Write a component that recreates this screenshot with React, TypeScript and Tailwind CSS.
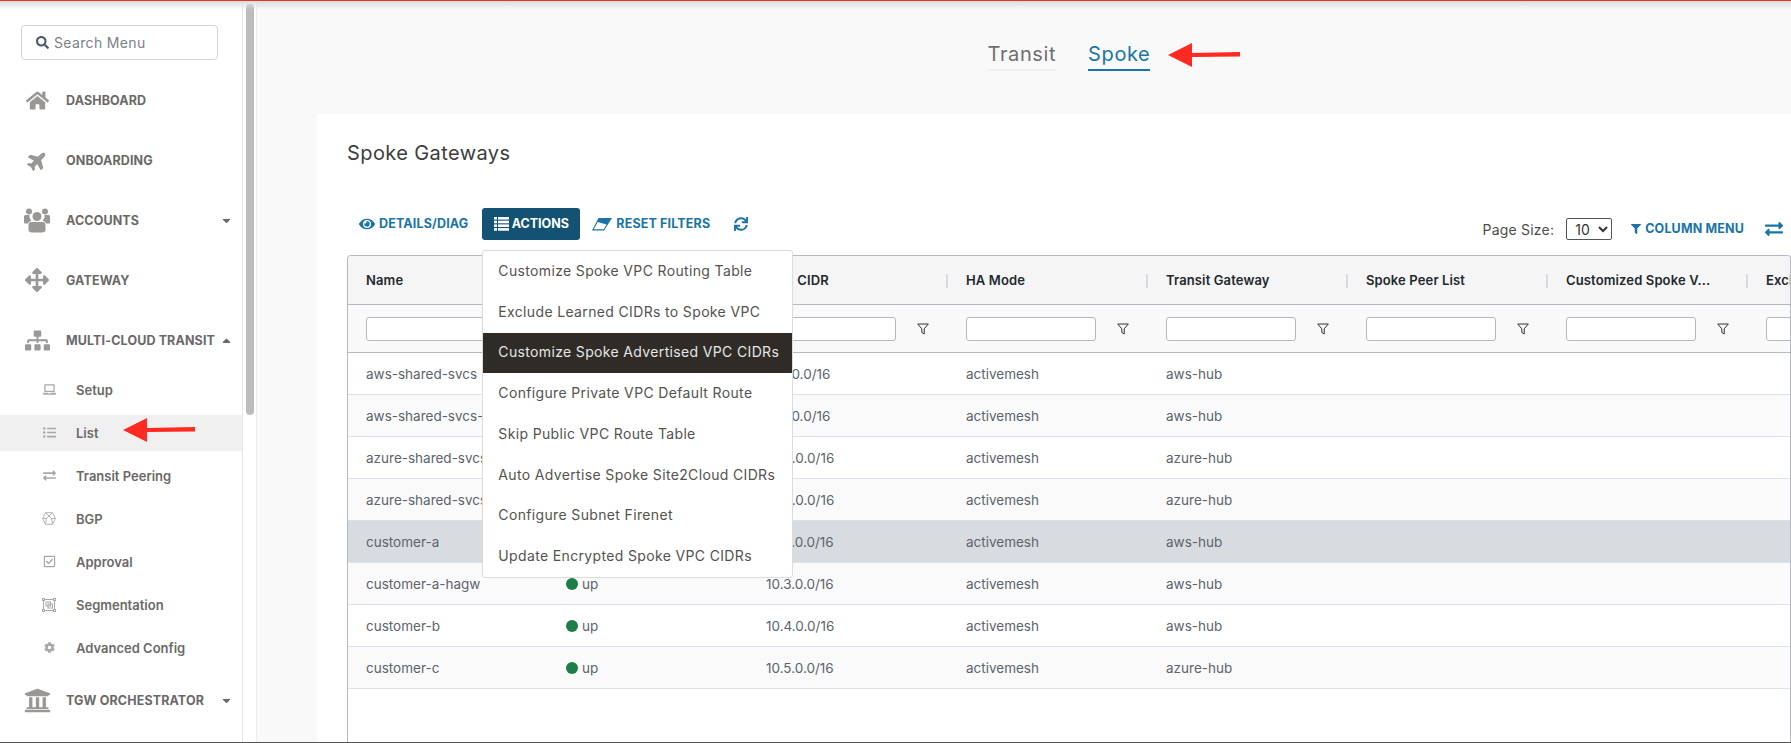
import type { ReactNode } from 'react';
import {
  FaHome,
  FaPlane,
  FaArrowsAlt,
  FaSitemap,
  FaLaptop,
  FaListUl,
  FaExchangeAlt,
  FaRegCheckSquare,
  FaCog,
  FaUniversity,
  FaEye,
  FaSync,
  FaFilter,
  FaSearch,
  FaCaretDown,
  FaCaretUp,
} from 'react-icons/fa';

const columns = [
  'Name',
  'Status',
  'VPC CIDR',
  'HA Mode',
  'Transit Gateway',
  'Spoke Peer List',
  'Customized Spoke V...',
  'Exclude Learned',
];

const rows = [
  ['aws-shared-svcs', '10.1.0.0/16', 'aws-hub'],
  ['aws-shared-svcs-hagw', '10.1.0.0/16', 'aws-hub'],
  ['azure-shared-svcs', '10.2.0.0/16', 'azure-hub'],
  ['azure-shared-svcs-hagw', '10.2.0.0/16', 'azure-hub'],
  ['customer-a', '10.3.0.0/16', 'aws-hub'],
  ['customer-a-hagw', '10.3.0.0/16', 'aws-hub'],
  ['customer-b', '10.4.0.0/16', 'aws-hub'],
  ['customer-c', '10.5.0.0/16', 'azure-hub'],
];

const menuItems = [
  'Customize Spoke VPC Routing Table',
  'Exclude Learned CIDRs to Spoke VPC',
  'Customize Spoke Advertised VPC CIDRs',
  'Configure Private VPC Default Route',
  'Skip Public VPC Route Table',
  'Auto Advertise Spoke Site2Cloud CIDRs',
  'Configure Subnet Firenet',
  'Update Encrypted Spoke VPC CIDRs',
];

function RedArrow({ className }: { className: string }) {
  return (
    <svg className={className} width="72" height="24" viewBox="0 0 72 24">
      <path d="M0 12 L24 0 L24 10 L72 9 L72 13.5 L24 14 L24 24 Z" fill="#ff2a22" />
    </svg>
  );
}

function UsersIcon() {
  return (
    <svg width="26" height="25" viewBox="0 0 26 25" fill="currentColor">
      <circle cx="5" cy="3.5" r="3" />
      <circle cx="21" cy="3.5" r="3" />
      <path d="M0 8.5 C0 7.5 1 7 2 7 H5.5 C5.2 9.5 6 11.5 7.5 12.5 C6 13 4.5 14 4 15.5 H1.5 C.5 15.5 0 15 0 14 Z" />
      <path d="M26 8.5 C26 7.5 25 7 24 7 H20.5 C20.8 9.5 20 11.5 18.5 12.5 C20 13 21.5 14 22 15.5 H24.5 C25.5 15.5 26 15 26 14 Z" />
      <circle cx="13" cy="8.5" r="4.5" />
      <path d="M7 14 H19 C20.8 14 21.5 15.5 21.5 17.5 V22 C21.5 23.5 20 24.5 18 24.5 H8 C6 24.5 4.5 23.5 4.5 22 V17.5 C4.5 15.5 5.2 14 7 14 Z" />
    </svg>
  );
}

function ThListIcon() {
  return (
    <svg width="15" height="14" viewBox="0 0 15 14" fill="currentColor">
      <rect x="0" y="0" width="3" height="2.6" />
      <rect x="4" y="0" width="11" height="2.6" />
      <rect x="0" y="3.7" width="3" height="2.6" />
      <rect x="4" y="3.7" width="11" height="2.6" />
      <rect x="0" y="7.4" width="3" height="2.6" />
      <rect x="4" y="7.4" width="11" height="2.6" />
      <rect x="0" y="11.1" width="3" height="2.6" />
      <rect x="4" y="11.1" width="11" height="2.6" />
    </svg>
  );
}

function EraserIcon() {
  return (
    <svg width="20" height="13" viewBox="0 0 20 13" fill="currentColor">
      <path d="M6.5 0 H20 L13 11 L12.3 12.5 H0 Z M5.7 4 L1.8 11.3 H11.7 L14.6 6.6 Z" fillRule="evenodd" />
    </svg>
  );
}

function BgpIcon() {
  return (
    <svg width="14" height="13" viewBox="0 0 14 13" fill="none" stroke="#b4b4b4" strokeWidth="1">
      <path d="M3.5 .7 H10.5 L13.4 6.5 L10.5 12.3 H3.5 L.6 6.5 Z M3.5 .7 L7 4 L10.5 .7 M.6 6.5 H4.5 L7 4 L9.5 6.5 H13.4 M4.5 6.5 L3.5 12.3 M9.5 6.5 L10.5 12.3" />
    </svg>
  );
}

function SegmentationIcon() {
  return (
    <svg width="14" height="14" viewBox="0 0 14 14" fill="none" stroke="#a8a8a8" strokeWidth="1">
      <rect x="1.5" y="1.5" width="11" height="11" />
      <rect x="4" y="4" width="4.5" height="4" />
      <rect x="6" y="6" width="4.5" height="4" />
      <rect x=".5" y=".5" width="2" height="2" fill="#fff" />
      <rect x="11.5" y=".5" width="2" height="2" fill="#fff" />
      <rect x=".5" y="11.5" width="2" height="2" fill="#fff" />
      <rect x="11.5" y="11.5" width="2" height="2" fill="#fff" />
    </svg>
  );
}

function FunnelIcon() {
  return (
    <svg width="12" height="12" viewBox="0 0 12 12" fill="none" stroke="#333" strokeWidth="1">
      <path d="M.7 1 H11.3 L7.2 5.8 V11 L4.8 9.4 V5.8 Z" strokeLinejoin="round" />
    </svg>
  );
}

function NavItem({ icon, label, caret }: { icon: ReactNode; label: string; caret?: 'up' | 'down' }) {
  return (
    <div className="flex h-[60px] items-center">
      <div className="flex w-[66px] items-center justify-center pl-[8px] text-[#999896]">{icon}</div>
      <span className="flex-1 whitespace-nowrap pt-[2px] text-[12.5px] font-bold tracking-[0.01em] text-[#6b6967]">{label}</span>
      {caret === 'down' && <FaCaretDown className="mr-[9px] text-[13px] text-[#6b6967]" />}
      {caret === 'up' && <FaCaretUp className="mr-[9px] text-[13px] text-[#6b6967]" />}
    </div>
  );
}

function SubItem({ icon, label, active }: { icon: ReactNode; label: string; active?: boolean }) {
  return (
    <div className="flex h-[43px] items-center">
      <div className={`flex h-[36px] w-full items-center ${active ? 'bg-[#f0f0f0]' : ''}`}>
        <div className="flex w-[76px] items-center justify-center pl-[22px] text-[13px] text-[#a8a8a8]">{icon}</div>
        <span className="whitespace-nowrap pt-[2px] text-[13px] font-semibold text-[#6b6967]">{label}</span>
      </div>
    </div>
  );
}

function Sidebar() {
  return (
    <aside className="relative w-[243px] shrink-0 border-r border-[#e6e6e6] bg-white pt-[25px]">
      <div className="mx-[21px] flex h-[35px] w-[197px] items-center rounded border border-[#d4d4d4] pl-[14px] text-[14px] tracking-[0.025em] text-[#7c8187]">
        <FaSearch className="mr-[5px] text-[13px] text-[#4a5a6a]" />
        Search Menu
      </div>
      <div className="mt-[10px]">
        <NavItem icon={<FaHome className="text-[23px]" />} label="DASHBOARD" />
        <NavItem icon={<FaPlane className="-rotate-45 text-[21px]" />} label="ONBOARDING" />
        <NavItem icon={<UsersIcon />} label="ACCOUNTS" caret="down" />
        <NavItem icon={<FaArrowsAlt className="text-[24px]" />} label="GATEWAY" />
        <NavItem icon={<FaSitemap className="text-[25px]" />} label="MULTI-CLOUD TRANSIT" caret="up" />
      </div>
      <div className="-mt-[2px]">
        <SubItem icon={<FaLaptop />} label="Setup" />
        <SubItem icon={<FaListUl />} label="List" active />
        <SubItem icon={<FaExchangeAlt />} label="Transit Peering" />
        <SubItem icon={<BgpIcon />} label="BGP" />
        <SubItem icon={<FaRegCheckSquare />} label="Approval" />
        <SubItem icon={<SegmentationIcon />} label="Segmentation" />
        <SubItem icon={<FaCog className="text-[11px]" />} label="Advanced Config" />
      </div>
      <div className="mt-[1px]">
        <NavItem icon={<FaUniversity className="text-[27px]" />} label="TGW ORCHESTRATOR" caret="down" />
      </div>
      <RedArrow className="absolute left-[123px] top-[418px]" />
    </aside>
  );
}

function ToolbarButton({ icon, label }: { icon: ReactNode; label: string }) {
  return (
    <div className="flex items-center gap-[4px] whitespace-nowrap text-[12.5px] font-bold tracking-[0.012em] text-[#1a74a6]">
      {icon}
      {label}
    </div>
  );
}

function ActionsMenu() {
  return (
    <div className="absolute left-[0px] top-[42px] z-10 w-[311px] overflow-hidden rounded-[3px] border border-[#dcdcdc] bg-white">
      {menuItems.map((item) => (
        <div
          key={item}
          className={`flex h-[40.75px] items-center whitespace-nowrap pb-[2px] pl-[15px] text-[14px] tracking-[0.025em] ${
            item === 'Customize Spoke Advertised VPC CIDRs' ? 'bg-[#2f2b27] text-[#e6e6e6]' : 'text-[#55524f]'
          }`}
        >
          {item}
        </div>
      ))}
    </div>
  );
}

function GatewayTable() {
  return (
    <div className="mt-[15px] h-[489px] overflow-hidden rounded-tl-[4px] rounded-tr-[4px] border-l border-r border-t border-[#b3b8c3] font-['Inter',sans-serif]">
      <div className="flex h-[49px] items-center border-b border-[#b3b8c3] bg-[#f5f5f5]">
        {columns.map((col, i) => (
          <div key={col} className="relative flex h-full w-[200px] shrink-0 items-center pl-[18px] pt-[2px] text-[13px] font-semibold tracking-[0.01em] text-[#24282c]">
            <span className="whitespace-nowrap">{col}</span>
            {i < columns.length - 1 && (
              <span className="absolute right-0 top-[18px] h-[14px] w-[2px] bg-[#d8dbdf]" />
            )}
          </div>
        ))}
      </div>
      <div className="flex h-[48px] items-center border-b border-[#b3b8c3] bg-[#f9f9f9]">
        {columns.map((col) => (
          <div key={col} className="flex w-[200px] shrink-0 items-center pl-[18px]">
            <div className="h-[24px] w-[130px] rounded-[3px] border border-[#b3b8c3] bg-white" />
            <div className="ml-[21px]">
              <FunnelIcon />
            </div>
          </div>
        ))}
      </div>
      {rows.map(([name, cidr, hub], i) => (
        <div
          key={name}
          className={`flex h-[42px] items-center border-b border-[#dde1ea] pt-[1px] text-[13.5px] text-[#5d636a] ${
            name === 'customer-a' ? 'bg-[#d8dce1]' : i % 2 === 1 ? 'bg-[#fafafa]' : 'bg-white'
          }`}
        >
          <div className="w-[200px] shrink-0 pl-[18px]">{name}</div>
          <div className="flex w-[200px] shrink-0 items-center pl-[18px]">
            <span className="mr-[4px] h-[12px] w-[12px] rounded-full bg-[#1e7e4a]" />
            up
          </div>
          <div className="w-[200px] shrink-0 pl-[18px]">{cidr}</div>
          <div className="w-[200px] shrink-0 pl-[18px]">activemesh</div>
          <div className="w-[200px] shrink-0 pl-[18px]">{hub}</div>
        </div>
      ))}
    </div>
  );
}

export default function App() {
  return (
    <div className="relative flex h-[743px] w-[1791px] overflow-hidden border-b border-[#555] bg-[#f9f9f9] font-['Inter',sans-serif]">
      <div className="absolute inset-x-0 top-0 z-20 h-[1px] bg-[#e8341c]" />
      <div className="absolute inset-x-0 top-[1px] z-20 h-[9px] bg-gradient-to-b from-[#d8dce2] to-transparent" />
      <Sidebar />

      {/* scrollbar gutter */}
      <div className="w-[14px] shrink-0 border-r border-[#ececec] bg-white pl-[3px] pt-[4px]">
        <div className="h-[411px] w-[8px] rounded-[4px] bg-[#bdbdbd]" />
      </div>

      <main className="min-w-0 flex-1 pl-[60px]">
        <div className="relative flex h-[114px] justify-center gap-[32px] pl-[30px] pt-[40px] text-[20px] tracking-[0.03em]">
          <div className="h-[31px] border-b-2 border-[#eeeeee] leading-[28px] text-[#6f6f6f]">Transit</div>
          <div className="h-[31px] border-b-2 border-[#1a74a6] leading-[28px] text-[#1a74a6]">Spoke</div>
          <RedArrow className="absolute left-[851px] top-[43px]" />
        </div>

        <section className="bg-white pl-[30px] pr-0 pt-[26px]">
          <h2 className="text-[20px] leading-[26px] tracking-[0.02em] text-[#3d3d3d]">Spoke Gateways</h2>
          <div className="mt-[42px] flex h-[32px] items-start justify-between">
            <div className="ml-[12px] flex h-[32px] items-center">
              <ToolbarButton icon={<FaEye className="text-[16px]" />} label="DETAILS/DIAG" />
              <div className="relative ml-[14px]">
                <div className="flex h-[32px] w-[98px] items-center justify-center gap-[3px] rounded-[3px] bg-[#145273] text-[12.5px] font-bold text-white">
                  <ThListIcon />
                  ACTIONS
                </div>
                <ActionsMenu />
              </div>
              <div className="ml-[12px]">
                <ToolbarButton icon={<EraserIcon />} label="RESET FILTERS" />
              </div>
              <FaSync className="ml-[24px] text-[14px] text-[#1a74a6]" />
            </div>
            <div className="mt-[10px] flex h-[22px] items-center">
              <span className="mr-[12px] text-[14px] tracking-[0.015em] text-[#4d4d4d]">Page Size:</span>
              <select
                defaultValue="10"
                className="h-[22px] w-[46px] rounded-[2px] border border-[#555] bg-white pl-[4px] text-[14px] text-[#333]"
              >
                <option value="10">10</option>
              </select>
              <div className="ml-[19px]">
                <ToolbarButton icon={<FaFilter className="text-[10px]" />} label="COLUMN MENU" />
              </div>
              <FaExchangeAlt className="ml-[21px] mr-[8px] text-[18px] text-[#1a74a6]" />
            </div>
          </div>
          <GatewayTable />
        </section>
      </main>
    </div>
  );
}
